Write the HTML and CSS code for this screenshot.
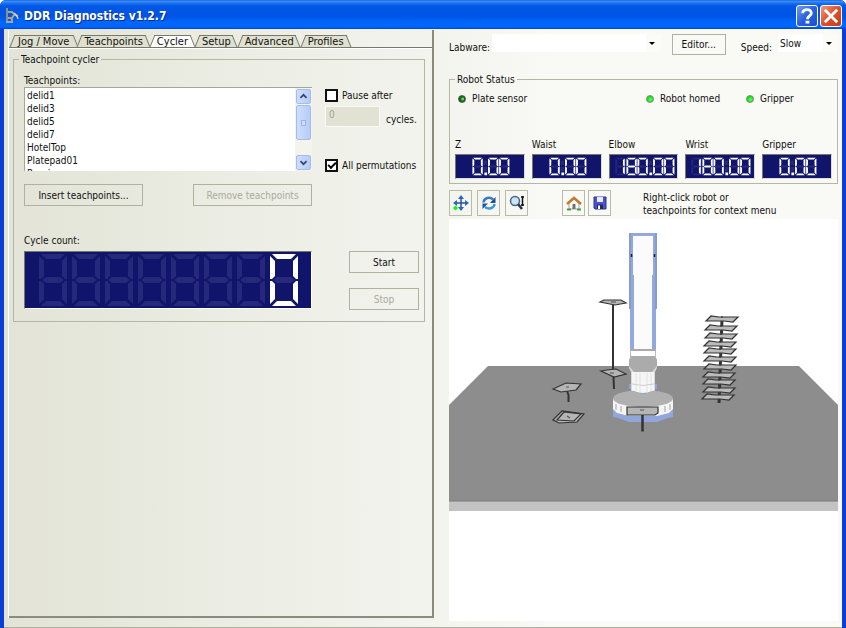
FILE: index.html
```html
<!DOCTYPE html>
<html lang="en">
<head>
<meta charset="utf-8">
<title>DDR Diagnostics v1.2.7</title>
<link rel="stylesheet" href="styles.css">
</head>
<body>
<svg class="defs" aria-hidden="true">
  <defs>
    <path id="seg-a" d="M2 0H26L21 5H7Z"/>
    <path id="seg-b" d="M28 2V25L26 25L23 22V7Z"/>
    <path id="seg-c" d="M28 50V27L26 27L23 30V45Z"/>
    <path id="seg-d" d="M2 52H26L21 47H7Z"/>
    <path id="seg-e" d="M0 50V27L2 27L5 30V45Z"/>
    <path id="seg-f" d="M0 2V25L2 25L5 22V7Z"/>
    <path id="seg-g" d="M3 26L7 23H21L25 26L21 29H7Z"/>
    <g id="d8"><use href="#seg-a"/><use href="#seg-b"/><use href="#seg-c"/><use href="#seg-d"/><use href="#seg-e"/><use href="#seg-f"/><use href="#seg-g"/></g>
    <g id="d0"><use href="#seg-a"/><use href="#seg-b"/><use href="#seg-c"/><use href="#seg-d"/><use href="#seg-e"/><use href="#seg-f"/></g>
    <g id="d1"><use href="#seg-b"/><use href="#seg-c"/></g>
    <g id="s8" transform="scale(.4 .365)"><use href="#d8"/></g>
    <g id="s0" transform="scale(.4 .365)"><use href="#d0"/></g>
    <g id="s1" transform="scale(.4 .365)"><use href="#d1"/></g>
    <g id="dot"><rect width="3" height="3"/></g>
    <g id="read-zero">
      <g class="off"><use href="#s8" x="16" y="3"/><use href="#s8" x="33" y="3"/><use href="#s8" x="45" y="3"/><rect x="28" y="6" width="4" height="5"/><rect x="28" y="13" width="4" height="5"/></g>
      <g class="on"><use href="#s0" x="16" y="3"/><use href="#dot" x="29" y="19"/><use href="#s0" x="33" y="3"/><use href="#s0" x="45" y="3"/></g>
    </g>
    <g id="read-180">
      <g class="off"><use href="#s8" x="4" y="3"/><use href="#s8" x="28" y="3"/><use href="#s8" x="45" y="3"/><use href="#s8" x="57" y="3"/><rect x="40" y="6" width="4" height="5"/><rect x="40" y="13" width="4" height="5"/></g>
      <g class="on"><use href="#s1" x="3" y="3"/><use href="#s8" x="16" y="3"/><use href="#s0" x="28" y="3"/><use href="#dot" x="41" y="19"/><use href="#s0" x="45" y="3"/><use href="#s0" x="57" y="3"/></g>
    </g>
    <path id="plate" d="M-16 2L-11 -3L-3 -2L16 -2L11 3L2 2Z"/>
  </defs>
</svg>

<div class="window">
  <header class="titlebar">
    <svg class="app-icon" viewBox="0 0 16 18" aria-hidden="true">
      <path d="M1 1h2v15H1z" fill="#8f8f86"/><path d="M3 5h4l3 3 3 1M3 11h4l2-3M1 15h6v-3" fill="none" stroke="#a9a595" stroke-width="2"/><path d="M9 6l3 3 1 3" fill="none" stroke="#d9d2bc" stroke-width="1.500"/>
    </svg>
    <h1>DDR Diagnostics v1.2.7</h1>
    <button class="caption help" type="button" aria-label="Help"><svg viewBox="0 0 21 21"><path d="M6 7.500C6 2.500 15 2.500 15 7.500C15 10.500 11 10.500 11 14" fill="none" stroke="#fff" stroke-width="3"/><path d="M9 15.500h4v3H9z" fill="#fff"/></svg></button>
    <button class="caption close" type="button" aria-label="Close"><svg viewBox="0 0 21 21"><path d="M4 4L17 17M17 4L4 17" stroke="#fff" stroke-width="3"/></svg></button>
  </header>

  <main class="content">
    <section class="panel">
      <nav class="tabs" role="tablist">
        <button class="tab" type="button" role="tab"><span>Jog / Move</span></button>
        <button class="tab" type="button" role="tab"><span>Teachpoints</span></button>
        <button class="tab active" type="button" role="tab" aria-selected="true"><span>Cycler</span></button>
        <button class="tab" type="button" role="tab"><span>Setup</span></button>
        <button class="tab" type="button" role="tab"><span>Advanced</span></button>
        <button class="tab" type="button" role="tab"><span>Profiles</span></button>
      </nav>
      <fieldset class="group cycler">
        <legend>Teachpoint cycler</legend>
        <div class="cycler-grid">
          <div class="field">
            <label for="points">Teachpoints:</label>
            <div class="listbox">
              <select id="points" size="7">
                <option>delid1</option><option>delid3</option><option>delid5</option><option>delid7</option><option>HotelTop</option><option>Platepad01</option><option>Regrip</option>
              </select>
              <div class="scrollbar">
                <button type="button" aria-label="Scroll up"><svg viewBox="0 0 15 15"><path d="M4 9l3.500-3.500L11 9"/></svg></button>
                <div class="thumb"><i></i></div>
                <button class="down" type="button" aria-label="Scroll down"><svg viewBox="0 0 15 15"><path d="M4 6l3.500 3.500L11 6"/></svg></button>
              </div>
            </div>
          </div>
          <div class="options">
            <label class="check"><input type="checkbox"><span>Pause after</span></label>
            <div class="cycles"><input id="cycles" type="text" value="0" disabled><label for="cycles">cycles.</label></div>
            <label class="check last"><input type="checkbox" checked><span>All permutations</span></label>
          </div>
          <div class="buttons">
            <button class="btn" type="button">Insert teachpoints...</button>
            <button class="btn" type="button" disabled>Remove teachpoints</button>
          </div>
          <div class="field count">
            <div>Cycle count:</div>
            <svg class="counter" viewBox="0 0 286 56" preserveAspectRatio="none" role="img" aria-label="0">
              <g class="off"><use href="#d8" x="14" y="2"/><use href="#d8" x="47" y="2"/><use href="#d8" x="80" y="2"/><use href="#d8" x="113" y="2"/><use href="#d8" x="146" y="2"/><use href="#d8" x="179" y="2"/><use href="#d8" x="212" y="2"/><use href="#d8" x="245" y="2"/></g>
              <use class="on" href="#d0" x="245" y="2"/>
            </svg>
          </div>
          <div class="run">
            <button class="btn" type="button">Start</button>
            <button class="btn" type="button" disabled>Stop</button>
          </div>
        </div>
      </fieldset>
    </section>

    <section class="side">
      <div class="labware-row">
        <label for="labware">Labware:</label>
        <div class="combo wide"><select id="labware"><option></option></select><i></i></div>
        <button class="btn editor" type="button">Editor...</button>
        <label for="speed">Speed:</label>
        <div class="combo"><select id="speed"><option>Slow</option></select><i></i></div>
      </div>
      <fieldset class="group status">
        <legend>Robot Status</legend>
        <div class="leds">
          <div class="led dark"><i></i>Plate sensor</div>
          <div class="led"><i></i>Robot homed</div>
          <div class="led"><i></i>Gripper</div>
        </div>
        <div class="readouts">
          <div>Z<svg viewBox="0 0 70 25" role="img" aria-label="0.00"><use href="#read-zero"/></svg></div>
          <div>Waist<svg viewBox="0 0 70 25" role="img" aria-label="0.00"><use href="#read-zero"/></svg></div>
          <div>Elbow<svg viewBox="0 0 70 25" role="img" aria-label="180.00"><use href="#read-180"/></svg></div>
          <div>Wrist<svg viewBox="0 0 70 25" role="img" aria-label="180.00"><use href="#read-180"/></svg></div>
          <div>Gripper<svg viewBox="0 0 70 25" role="img" aria-label="0.00"><use href="#read-zero"/></svg></div>
        </div>
      </fieldset>
      <div class="toolbar">
        <button class="tool" type="button" aria-label="Move"><svg viewBox="0 0 16 16"><path d="M8 2v12M2 8h12" stroke="#24529c" stroke-width="1.500"/><path d="M8 0l3 4H5zM8 16l3-4H5zM0 8l4-3v6zM16 8l-4-3v6z" fill="#2f65b8"/><path d="M2.500 10.500L5 13L2.500 15.500L0 13z" fill="#0f0"/></svg></button>
        <button class="tool" type="button" aria-label="Rotate"><svg viewBox="0 0 16 16"><path d="M2.500 7.500C3 2.500 9 1.500 12 4.500" fill="none" stroke="#3c78c8" stroke-width="2.500"/><path d="M14.500 2v6H9z" fill="#1d4d96"/><path d="M13.500 9C13 14 7 14.500 4 12" fill="none" stroke="#3c9ad2" stroke-width="2.500"/><path d="M1.500 14V8.500H7z" fill="#24529c"/></svg></button>
        <button class="tool" type="button" aria-label="Zoom"><svg viewBox="0 0 16 16"><circle cx="6" cy="6" r="4.500" fill="#c8e4fa" stroke="#4a6584" stroke-width="1.500"/><path d="M9 9l4 5" stroke="#27364e" stroke-width="2.500"/><path d="M13.500 1v10M12 2h3M12 10h3" stroke="#111" stroke-width="1.500"/></svg></button>
        <button class="tool home" type="button" aria-label="Home"><svg viewBox="0 0 16 16"><path d="M3 8l5-5 5 5v6H3z" fill="#fff" stroke="#aaa794"/><path d="M1 9l7-6 7 6" fill="none" stroke="#c27a2d" stroke-width="2.500"/><path d="M6.500 9h3v5h-3z" fill="#77716c"/><path d="M1 14.500h4M11 14.500h4" stroke="#42a047" stroke-width="2"/></svg></button>
        <button class="tool" type="button" aria-label="Save"><svg viewBox="0 0 16 16"><path d="M2 2h12v12H3l-1-1z" fill="#4b55c8" stroke="#2e3694"/><path d="M5 2h6v5H5z" fill="#e9ecff"/><path d="M5 9.500h6V14H5z" fill="#222a64"/><path d="M6 10.500h2V14H6z" fill="#fff"/></svg></button>
        <p>Right-click robot or<br>teachpoints for context menu</p>
      </div>
      <svg class="scene" viewBox="449 219 389 402" preserveAspectRatio="xMidYMin meet" role="img" aria-label="Robot">
        <path d="M449 405L488 366H799L838 405V501H449Z" fill="#8d8d8d"/>
        <path d="M449 501H838V511H449Z" fill="#c3c3c3"/>
        <path d="M449 501H838" stroke="#7c7c7c"/>
        <path d="M629 384h4v5h-4zM653 384h4v5h-4z" fill="#90a4d4"/>
        <path d="M629 233H657V309H656V350H630V309H629Z" fill="#93a9dc"/>
        <path d="M633 236H653V275H652V350H634V275H633Z" fill="#fbfbfb"/>
        <path d="M630 233V309M656 233V309" stroke="#7085b8" stroke-width=".7"/>
        <path d="M631.500 254v3M654.500 254v3" stroke="#222" stroke-width="1.500"/>
        <path d="M630 349H656V357H630Z" fill="#fff"/><path d="M630 350H656" stroke="#aaa" stroke-width="2"/><path d="M630.500 350V357M655.500 350V357" stroke="#bbb"/>
        <path d="M629 359L632 356H654L657 359V368L655 372V392H631V372L629 368Z" fill="#d8d8d8"/>
        <path d="M629 360L631 356H655L657 360V366L652 372H634L629 366Z" fill="#ababab"/>
        <path d="M632 372H654V391Q643 396 632 391Z" fill="#f5f5f5"/>
        <path d="M613 408V417L618 418L629 422H657L668 418L673 417V408Z" fill="#91a6dc"/>
        <path d="M613 399H673V409L669 413L657 416H629L617 413L613 409Z" fill="#f5f5f5"/>
        <path d="M616 404v6M621 406v6M665 406v6M670 404v6" stroke="#ccc" stroke-width="2"/>
        <ellipse cx="643" cy="398.500" rx="30" ry="8.500" fill="#b0b0b0"/>
        <path d="M632 382V390Q643 396 654 390V382Z" fill="#f7f7f7"/>
        <path d="M636 373V391M640 373V393M647 373V393M651 373V391" stroke="#e2e2e2"/>
        <path d="M632 384Q643 387 654 384" fill="none" stroke="#cfcfcf"/><path d="M640 393.500h6" stroke="#91a6dc"/>
        <g fill="#b5b5b5" stroke="#333" stroke-width="1.200">
          <path d="M642.500 415V431.500" stroke-width="2.500"/>
          <path d="M627 407H658V413L655 415H627Z"/>
          <path d="M613 304V366L614 389M613 304V372" stroke-width="2"/>
          <path d="M600 302L604 300L621 300L626 303L615 305Z"/>
          <path d="M601 371L607 370L616 369L626 374L614 377Z"/>
          <path d="M567 391L568.500 395V402" fill="none" stroke-width="2"/>
          <path d="M553 389L566 383L581 384L576 390L561 392Z"/>
          <path d="M553 420L562 411L584 414L577 422L559 423Z"/>
          <path d="M557 420L564 412L581 414L574 421Z"/>
          <path d="M611 302h5M610 373h4M566 387h3M567 416l3 2M640 410h4" stroke="#555"/>
        </g>
        <path d="M722 319L719 403" stroke="#333" stroke-width="3"/>
        <g fill="#bbb" stroke="#333" stroke-width="1.200">
          <use href="#plate" x="722" y="319"/><use href="#plate" x="721" y="328"/><use href="#plate" x="721" y="336"/><use href="#plate" x="720" y="344"/><use href="#plate" x="720" y="351"/><use href="#plate" x="720" y="359"/><use href="#plate" x="720" y="367"/><use href="#plate" x="719" y="375"/><use href="#plate" x="719" y="382"/><use href="#plate" x="719" y="390"/><use href="#plate" x="718" y="397"/>
        </g>
        <path d="M722 316v6M721 325v6M721 333v6M720 341v6M720 348v6M720 356v6M720 364v6M719 372v6M719 379v6M719 387v6" stroke="#444" stroke-width="1.500" stroke-dasharray="2 3"/>
      </svg>
    </section>
  </main>
</div>
</body>
</html>
```
FILE: styles.css
```css
* {
  box-sizing: border-box;
}

body {
  margin: 0;
  background: #fff;
  color: #111;
  font: 10px/13px "DejaVu Sans Condensed", "Noto Sans", "Liberation Sans", sans-serif;
}

button,
input,
select {
  margin: 0;
  font: inherit;
  color: inherit;
}

svg {
  display: block;
}

.defs {
  position: absolute;
  width: 0;
  height: 0;
}

.window {
  display: flex;
  flex-direction: column;
  min-height: 100vh;
  border-radius: 6px 6px 0 0;
  overflow: hidden;
  background: #0a3fd6;
}

.titlebar {
  display: flex;
  align-items: center;
  gap: 2px;
  height: 29px;
  padding: 3px 4px 0 5px;
  background: linear-gradient(#0b50cf 0, #3f94fa 1px, #1f72f2 3px, #0057e5 6px, #0054e3 16px, #0066fb 22px, #0066ff 27px, #0143c8 29px);
}

.app-icon {
  width: 16px;
  height: 18px;
}

.titlebar h1 {
  flex: 1;
  margin: 0;
  padding-left: 1px;
  color: #fff;
  font-size: 12px;
  line-height: 16px;
  text-shadow: 1px 1px #0a2a80;
}

.caption {
  width: 22px;
  height: 22px;
  padding: 0;
  border: 1px solid #fff;
  border-radius: 3px;
}

.help {
  background: linear-gradient(135deg, #6f9df5, #2a60dd 50%, #1d4fd0);
}

.close {
  background: linear-gradient(135deg, #f09a80, #dd4f2a 50%, #c43d17);
}

.content {
  flex: 1;
  display: grid;
  grid-template-columns: minmax(0, 425fr) minmax(0, 389fr);
  gap: 15px;
  margin: 0 4px;
  padding: 1px 4px 0 5px;
  border-bottom: 1px solid #aeb09c;
  background: linear-gradient(90deg, #e3e4d7, #f3f4ee 52%, #f9f9f5 65%);
}

.panel {
  margin-bottom: 9px;
  padding: 5px 0 0;
  border: solid #8d8b7e;
  border-width: 0 2px 2px 0;
  box-shadow: -1px 0 #fff;
}

.tabs {
  display: flex;
  height: 13px;
  padding-left: 1px;
  border-bottom: 1px solid #77776c;
  box-shadow: 0 1px #fff;
}

.tab {
  position: relative;
  height: 12px;
  padding: 0 7px;
  border: 0;
  background: none;
  font-size: 11px;
  line-height: 14px;
  white-space: nowrap;
}

.tab:first-child {
  padding: 0 8px;
}

.tab span {
  position: relative;
  z-index: 1;
}

.tab::before,
.tab::after {
  content: "";
  position: absolute;
  top: 0;
  bottom: 0;
  border-top: 1px solid #77776c;
  background: #dfe0d0;
}

.tab::before {
  left: 2px;
  right: 50%;
  border-left: 1px solid #77776c;
  transform: skewX(-22deg);
}

.tab::after {
  left: 50%;
  right: 2px;
  border-right: 1px solid #77776c;
  transform: skewX(22deg);
}

.tab.active::before,
.tab.active::after {
  background: #fff;
}

.group {
  min-width: 0;
  margin: 0;
  border: 1px solid #b5b6a3;
}

.group legend {
  padding: 0 2px;
}

.cycler {
  margin: 5px 7px 0 4px;
  padding: 8px 5px 11px 10px;
}

.cycler legend {
  margin-left: -5px;
}

.cycler-grid {
  display: grid;
  grid-template-columns: minmax(0, 1fr) 94px;
  column-gap: 13px;
}

.listbox {
  display: flex;
  height: 84px;
  border: solid #a5a698;
  border-width: 1px 0 0 1px;
  background: #fff;
}

.listbox select {
  flex: 1;
  height: 83px;
  min-width: 0;
  padding: 2px 0 0;
  border: 0;
  outline: 0;
  background: none;
  overflow: hidden;
}

.listbox option {
  min-height: 13px;
  padding: 0 2px;
  line-height: 13px;
}

.scrollbar {
  display: flex;
  flex-direction: column;
  width: 17px;
  padding: 1px;
  background: #f4f3ec;
}

.scrollbar button,
.thumb {
  flex: none;
  height: 15px;
  padding: 0;
  border: 1px solid #a4bbef;
  border-radius: 2px;
  background: linear-gradient(90deg, #cfdefd, #b5cbfa);
}

.scrollbar svg {
  width: 13px;
  height: 13px;
  fill: none;
  stroke: #33486e;
  stroke-width: 2;
}

.scrollbar .thumb {
  display: grid;
  place-items: center;
  height: 35px;
  margin-top: 1px;
}

.thumb i {
  width: 5px;
  height: 6px;
  border: 1px solid #9ab4ee;
  background: #cfdefd;
}

.scrollbar .down {
  margin-top: auto;
}

.options {
  display: flex;
  flex-direction: column;
  padding-top: 15px;
}

.check {
  display: flex;
  align-items: center;
  gap: 4px;
  white-space: nowrap;
}

.check input {
  flex: none;
  appearance: none;
  display: grid;
  place-items: center;
  width: 13px;
  height: 13px;
  border: 2px solid #111;
  background: #fff;
}

.check input:checked::before {
  content: "";
  width: 6px;
  height: 3px;
  margin-bottom: 2px;
  border: solid #000;
  border-width: 0 0 2px 2px;
  transform: rotate(-45deg);
}

.cycles {
  display: flex;
  align-items: center;
  gap: 6px;
  margin-top: 4px;
}

.cycles input {
  width: 55px;
  height: 21px;
  padding: 0 4px 5px 3px;
  border: 1px solid #fafaf4;
  background: #e1e2d3;
  color: #a3a492;
}

.cycles label {
  padding-top: 6px;
}

.options .last {
  margin-top: auto;
  margin-bottom: -1px;
}

.buttons {
  grid-column: 1 / -1;
  display: flex;
  justify-content: space-between;
  margin-right: 107px;
  padding-top: 13px;
}

.btn {
  height: 22px;
  padding: 0;
  border: 1px solid #b1b29d;
  background: none;
  white-space: nowrap;
}

.btn:disabled {
  color: #aaab9b;
}

.buttons .btn {
  width: 119px;
}

.count {
  padding-top: 28px;
}

.counter {
  width: 100%;
  height: 58px;
  margin-top: 4px;
  border: 1px solid;
  border-color: #77776c #fff #fff #77776c;
  background: #10146b;
}

.off {
  fill: #26287a;
}

.on {
  fill: #fff;
}

.run {
  display: flex;
  flex-direction: column;
  gap: 15px;
  padding: 45px 0 0 24px;
}

.side {
  display: flex;
  flex-direction: column;
  min-width: 0;
  padding-bottom: 6px;
}

.labware-row {
  display: flex;
  align-items: flex-start;
  padding-top: 4px;
}

.labware-row label {
  padding-top: 7px;
}

.combo {
  position: relative;
  width: 60px;
  margin-left: 6px;
}

.combo.wide {
  flex: 1;
  margin-left: 2px;
}

.combo select {
  appearance: none;
  display: block;
  width: 100%;
  height: 18px;
  padding: 0 16px 0 2px;
  border: 0;
  background: linear-gradient(#fbfbf8, #fbfbf8) right / 15px 100% no-repeat #fff;
}

.combo i {
  position: absolute;
  top: 8px;
  right: 6px;
  border: solid transparent;
  border-width: 3px 3px 0;
  border-top-color: #000;
}

.editor {
  width: 54px;
  height: 21px;
  margin: 0 15px 0 11px;
}

.status {
  margin-top: 18px;
  padding: 6px 5px 4px;
}

.leds {
  display: grid;
  grid-template-columns: 190fr 101fr 87fr;
  padding-left: 3px;
}

.led {
  display: flex;
  align-items: center;
  gap: 6px;
}

.led i {
  width: 8px;
  height: 8px;
  border: 1px solid #858585;
  border-radius: 50%;
  background: radial-gradient(circle at 60% 60%, #4f4 1px, #0ce40c 3px);
}

.led.dark i {
  border-color: #555;
  background: radial-gradient(circle at 60% 50%, #6c6 1px, #066a06 2px);
}

.readouts {
  display: grid;
  grid-template-columns: repeat(5, minmax(0, 1fr));
  gap: 7px;
  margin-top: 33px;
}

.readouts svg {
  width: 100%;
  height: 25px;
  margin-top: 3px;
  border: 1px solid;
  border-color: #77776c #ddd #ddd #77776c;
  background: #10146b;
}

.toolbar {
  display: flex;
  gap: 5px;
  padding: 6px 0 2px;
}

.tool {
  display: grid;
  place-items: center;
  width: 23px;
  height: 26px;
  padding: 0;
  border: 1px solid #b9baa8;
  background: none;
}

.tool svg {
  width: 16px;
  height: 16px;
}

.tool.home {
  margin: 0 -2px 0 29px;
}

.toolbar p {
  margin: 1px 0 0 27px;
  white-space: nowrap;
}

.scene {
  flex: 1;
  width: 100%;
  min-height: 0;
  background: #fff;
}
```
